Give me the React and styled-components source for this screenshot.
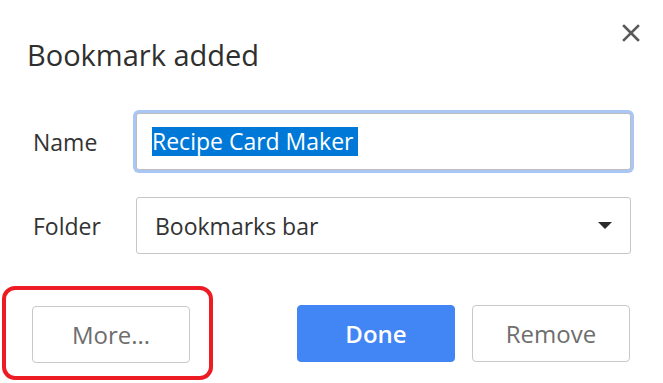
import React from "react";
import styled, { createGlobalStyle } from "styled-components";

const Global = createGlobalStyle`
  html, body { margin: 0; padding: 0; background: #ffffff; }
  body { font-family: "Open Sans", "Noto Sans", sans-serif; color: #333333; }
  * { box-sizing: border-box; }
`;

const Dialog = styled.div`
  width: 663px;
  height: 383px;
  display: flex;
  flex-direction: column;
  overflow: hidden;
`;

const Header = styled.div`
  display: flex;
  justify-content: space-between;
  align-items: flex-start;
  padding: 24px 23px 0 27px;
`;

const Title = styled.h1`
  margin: 11px 0 0 0;
  font-size: 29px;
  line-height: 40px;
  font-weight: 400;
  color: #2f2f2f;
`;

const CloseButton = styled.button`
  width: 18px;
  height: 18px;
  padding: 0;
  border: none;
  background: none;
  display: flex;
  align-items: center;
  justify-content: center;
  cursor: pointer;
`;

const Form = styled.div`
  display: grid;
  grid-template-columns: 103px 1fr;
  row-gap: 27px;
  align-items: center;
  padding: 38px 32px 0 33px;
`;

const Label = styled.label`
  font-size: 23px;
  color: #333333;
`;

const Field = styled.div`
  height: 57px;
  border: 1px solid ${(p) => (p.$focused ? "#bdbdbd" : "#c6c6c6")};
  border-radius: 3px;
  box-shadow: ${(p) => (p.$focused ? "0 0 0 3px #a9c6f5" : "none")};
  display: flex;
  align-items: center;
  justify-content: space-between;
  padding: 0 18px 0 ${(p) => (p.$focused ? "15px" : "18px")};
  font-size: 23px;
  color: #333333;
  background: #ffffff;
`;

const Selected = styled.span`
  display: inline-block;
  background: #0078d7;
  color: #ffffff;
  line-height: 29px;
  padding-right: 5px;
`;

const Arrow = styled.span`
  width: 0;
  height: 0;
  border-left: 7px solid transparent;
  border-right: 7px solid transparent;
  border-top: 7px solid #2b2b2b;
`;

const Actions = styled.div`
  display: flex;
  align-items: center;
  padding: 32px 33px 0 2px;
`;

const Highlight = styled.div`
  border: 4px solid #ed1c24;
  border-radius: 13px;
  padding: 16px 19px 13px 26px;
`;

const Spacer = styled.div`
  flex: 1;
`;

const Button = styled.button`
  width: 158px;
  height: 57px;
  border-radius: 4px;
  font-family: "Open Sans", "Noto Sans", sans-serif;
  font-size: 24px;
  cursor: pointer;
  border: 1px solid ${(p) => (p.$primary ? "#4285f4" : "#c9c9c9")};
  background: ${(p) => (p.$primary ? "#4285f4" : "#ffffff")};
  color: ${(p) => (p.$primary ? "#ffffff" : "#6e6e6e")};
  font-weight: ${(p) => (p.$primary ? 600 : 400)};
  margin-left: ${(p) => p.$gap || 0}px;
`;

export default function App() {
  return (
    <>
      <Global />
      <Dialog>
        <Header>
          <Title>Bookmark added</Title>
          <CloseButton aria-label="Close">
            <svg width="18" height="18" viewBox="0 0 18 18">
              <path d="M2 2 L16 16 M16 2 L2 16" stroke="#5a5a5a" strokeWidth="2.6" strokeLinecap="square" />
            </svg>
          </CloseButton>
        </Header>
        <Form>
          <Label>Name</Label>
          <Field $focused>
            <Selected>Recipe Card Maker</Selected>
          </Field>
          <Label>Folder</Label>
          <Field>
            <span>Bookmarks bar</span>
            <Arrow />
          </Field>
        </Form>
        <Actions>
          <Highlight>
            <Button>More...</Button>
          </Highlight>
          <Spacer />
          <Button $primary>Done</Button>
          <Button $gap={17}>Remove</Button>
        </Actions>
      </Dialog>
    </>
  );
}
